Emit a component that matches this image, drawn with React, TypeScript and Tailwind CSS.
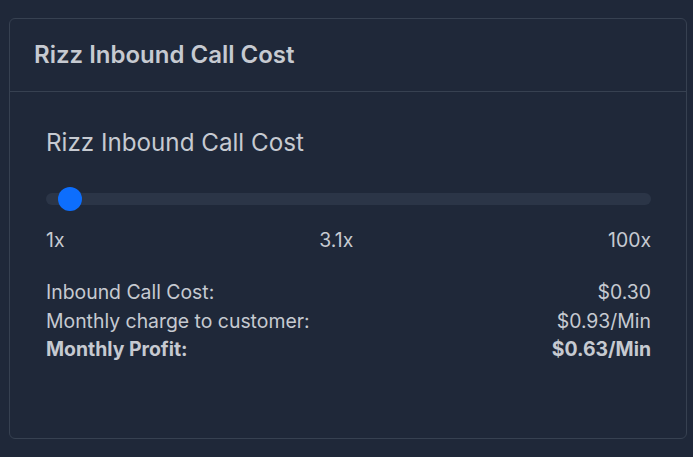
import React, { useState } from 'react';

export default function App() {
  const [val] = useState(1);
  const pct = ((val - 1) / 99) * 100;

  return (
    <div className="min-h-screen w-full bg-[#1f2839] pt-[18px] pl-[9px] pr-[6px] font-['Inter',sans-serif] text-[#c6cad1]">
      <div className="w-[678px] h-[421px] rounded-md border border-[#374151] bg-[#1f2839]">
        <div className="h-[73px] flex items-center px-6 border-b border-[#374151]">
          <h2 className="text-[24px] font-semibold text-[#c6cad1]">Rizz Inbound Call Cost</h2>
        </div>
        <div className="pl-9 pr-[35px] pt-[36px]">
          <h3 className="text-[24.2px] leading-[30px]">Rizz Inbound Call Cost</h3>

          {/* slider */}
          <div className="relative mt-[35px] h-[12px] rounded-full bg-[#2b3547]">
            <div
              className="absolute top-1/2 h-6 w-6 -translate-y-1/2 rounded-full bg-[#0d6efd]"
              style={{ left: `calc(${pct}% * 0.96 + 12px)` }}
            />
          </div>
          <div className="mt-[21px] flex justify-between text-[19.4px] leading-[28.8px]">
            <span>1x</span>
            <span>3.1x</span>
            <span>100x</span>
          </div>

          <div className="mt-[23px] text-[19.4px] leading-[28.8px]">
            <div className="flex justify-between">
              <span>Inbound Call Cost:</span>
              <span>$0.30</span>
            </div>
            <div className="flex justify-between">
              <span>Monthly charge to customer:</span>
              <span>$0.93/Min</span>
            </div>
            <div className="flex justify-between font-bold">
              <span>Monthly Profit:</span>
              <span>$0.63/Min</span>
            </div>
          </div>
        </div>
      </div>
    </div>
  );
}
